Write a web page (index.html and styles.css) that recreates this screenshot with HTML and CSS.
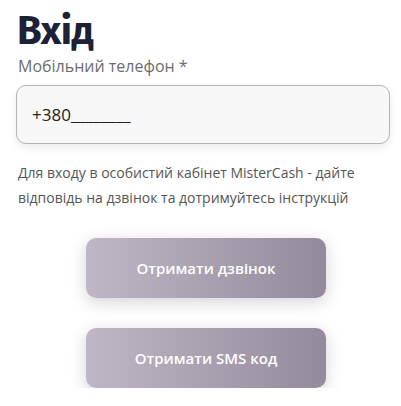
FILE: index.html
```html
<!DOCTYPE html>
<html lang="uk">
<head>
<meta charset="utf-8">
<link rel="stylesheet" href="styles.css">
</head>
<body>
<main class="login">
  <h1 class="title">Вхід</h1>
  <label class="label" for="phone">Мобільний телефон *</label>
  <div class="field" id="phone">+380________</div>
  <p class="hint">Для входу в особистий кабінет MisterCash - дайте відповідь на дзвінок та дотримуйтесь інструкцій</p>
  <div class="actions">
    <button class="btn">Отримати дзвінок</button>
    <button class="btn">Отримати SMS код</button>
  </div>
</main>
</body>
</html>
```
FILE: styles.css
```css
html, body {
  margin: 0;
  padding: 0;
  background: #ffffff;
}
.login {
  padding: 8px 11px 0 16px;
  font-family: "Open Sans", "Noto Sans", sans-serif;
  display: flex;
  flex-direction: column;
}
.title {
  margin: 0 0 0 1px;
  font-family: "Fira Sans", "Noto Sans", "Open Sans", sans-serif;
  font-weight: 700;
  font-size: 40px;
  line-height: 46px;
  color: #1d2136;
  letter-spacing: -0.5px;
}
.label {
  margin: 0 0 0 2px;
  font-size: 16px;
  line-height: 24px;
  color: #6d6d6d;
}
.field {
  margin-top: 7px;
  box-sizing: border-box;
  height: 59px;
  border: 1px solid #b4b4b4;
  border-radius: 10px;
  background: #f7f7f7;
  box-shadow: 0 4px 8px rgba(0,0,0,0.08);
  padding: 0 15px;
  display: flex;
  align-items: center;
  font-size: 17px;
  color: #222222;
}
.hint {
  margin: 16px 0 0 2px;
  font-size: 14px;
  line-height: 25px;
  color: #555555;
}
.actions {
  margin-top: 28px;
  display: flex;
  flex-direction: column;
  align-items: center;
  gap: 30px;
  padding-left: 6px;
}
.btn {
  width: 240px;
  height: 60px;
  border: none;
  border-radius: 10px;
  background: linear-gradient(90deg, #bfb7c5 0%, #938b9b 100%);
  box-shadow: 0 4px 16px rgba(60, 50, 70, 0.22);
  color: #ffffff;
  font-family: "Open Sans", "Noto Sans", sans-serif;
  font-weight: 600;
  font-size: 15px;
}
```
